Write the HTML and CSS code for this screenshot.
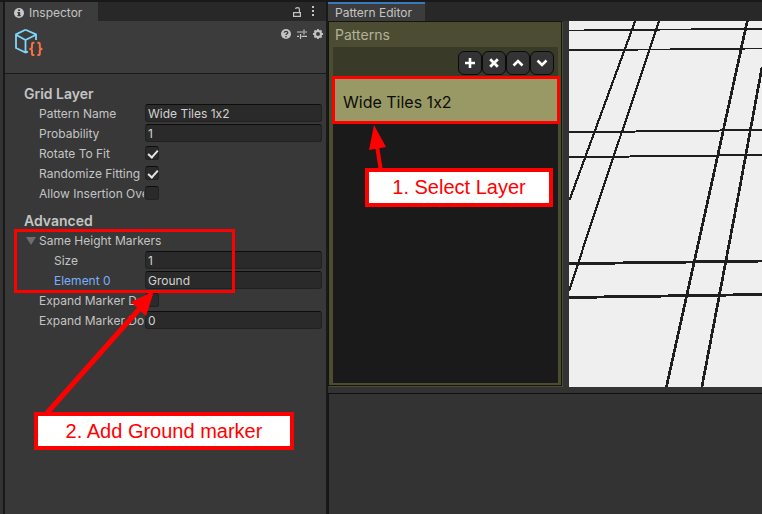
FILE: index.html
```html
<!DOCTYPE html>
<html lang="en">
<head>
<meta charset="utf-8">
<title>Pattern Editor</title>
<link rel="stylesheet" href="styles.css">
</head>
<body>
<div class="workspace">
  <div class="dock-edge"></div>
  <section class="inspector" aria-label="Inspector">
    <header class="tab-strip">
      <div class="tab tab-inspector">
        <svg width="10" height="10" viewBox="0 0 10 10"><circle cx="5" cy="5" r="5" fill="#c8c8c8"/><path d="M4 1.5h2v1.6H4zM3.4 4h2.8v3h.6v1.3H3.4V7H4V5.2h-.6z" fill="#3c3c3c"/></svg>
        <span>Inspector</span>
      </div>
      <div class="strip-tools">
        <button aria-label="Lock"><svg width="10" height="12" viewBox="0 0 10 12" fill="none" stroke="#c4c4c4" stroke-width="1.2"><path d="M1.6 6.6h6.8v3.8H1.6zM7.4 6.5V3.2Q7.4 1.6 5.5 1.6Q3.6 1.6 3.6 3"/></svg></button>
        <button aria-label="Menu"><svg width="4" height="12" viewBox="0 0 4 12" fill="#c4c4c4"><path d="M1 0h2v2H1zM1 4h2v2H1zM1 8h2v2H1z"/></svg></button>
      </div>
    </header>
    <div class="asset-header">
      <svg class="asset-icon" width="30" height="30" viewBox="0 0 30 30" fill="none">
        <path d="M12.500 1.800L23 6.400V12M12.500 1.800L3 6.400V20L12.500 24.600L15 23.600M3 6.800L12.500 12L23 6.800M12.500 12V24" stroke="#7fd6fd" stroke-width="1.8"/>
        <path d="M21.400 14.800H20.400Q19 14.800 19 16.200V19.200Q19 20.900 16.400 20.900Q19 20.900 19 22.600V25.400Q19 27 20.400 27H21.400M24.400 14.800H25.400Q26.800 14.800 26.800 16.200V19.200Q26.800 20.900 29.400 20.900Q26.800 20.900 26.800 22.600V25.400Q26.800 27 25.400 27H24.400" stroke="#ff6e40" stroke-width="2"/>
      </svg>
      <div class="asset-tools">
        <button aria-label="Help"><svg width="10" height="10" viewBox="0 0 10 10"><circle cx="5" cy="5" r="5" fill="#c4c4c4"/><path d="M3.2 3.8Q3.3 2.3 5 2.3Q6.8 2.3 6.8 3.6Q6.8 4.4 5.9 4.8Q5 5.2 5 6M5 7v1.4" fill="none" stroke="#3c3c3c" stroke-width="1.3"/></svg></button>
        <button aria-label="Presets"><svg width="10" height="10" viewBox="0 0 10 10" fill="none" stroke="#c4c4c4" stroke-width="1.2"><path d="M0 3h6M8 3h2M7 .5v5M0 7.4h2M4.5 7.4H10M3.5 5v5"/></svg></button>
        <button aria-label="Settings"><svg width="10" height="10" viewBox="0 0 10 10" fill="none" stroke="#c4c4c4"><circle cx="5" cy="5" r="3" stroke-width="2"/><path d="M5 0v2M5 8v2M0 5h2M8 5h2M1.5 1.5l1.3 1.3M7.2 7.2l1.3 1.3M1.5 8.5l1.3-1.3M7.2 2.8l1.3-1.3" stroke-width="1.8"/></svg></button>
      </div>
    </div>
    <form class="properties">
      <h2>Grid Layer</h2>
      <div class="row"><label for="name">Pattern Name</label><input class="field" id="name" type="text" value="Wide Tiles 1x2"></div>
      <div class="row"><label for="prob">Probability</label><input class="field" id="prob" type="text" value="1"></div>
      <div class="row"><label for="rotate">Rotate To Fit</label><input class="check" id="rotate" type="checkbox" checked></div>
      <div class="row"><label for="random">Randomize Fitting</label><input class="check" id="random" type="checkbox" checked></div>
      <div class="row"><label for="overlap">Allow Insertion Overlap</label><input class="check" id="overlap" type="checkbox"></div>
      <h2 class="advanced">Advanced</h2>
      <button class="foldout" type="button" aria-expanded="true"><svg width="10" height="8" viewBox="0 0 10 8"><path d="M0 0h10L5 8z" fill="#6e6e6e"/></svg>Same Height Markers</button>
      <div class="row nested"><label for="size">Size</label><input class="field" id="size" type="text" value="1"></div>
      <div class="row nested"><label class="active" for="element">Element 0</label><input class="field" id="element" type="text" value="Ground"></div>
      <div class="row"><label for="domain">Expand Marker Domain</label><input class="check" id="domain" type="checkbox"></div>
      <div class="row"><label for="amount">Expand Marker Domain Amount</label><input class="field" id="amount" type="text" value="0"></div>
    </form>
  </section>
  <section class="editor" aria-label="Pattern Editor">
    <header class="tab-strip"><div class="tab tab-editor">Pattern Editor</div></header>
    <div class="editor-main">
      <div class="patterns">
        <h3>Patterns</h3>
        <div class="pattern-list">
          <div class="list-tools">
            <button aria-label="Add"><svg width="12" height="12" viewBox="0 0 12 12"><path d="M6 1v10M1 6h10" stroke-width="2.6"/></svg></button>
            <button aria-label="Remove"><svg width="12" height="12" viewBox="0 0 12 12"><path d="M2.2 2.2l7.6 7.6M9.8 2.2L2.2 9.8" stroke-width="2.8"/></svg></button>
            <button aria-label="Move up"><svg width="12" height="12" viewBox="0 0 12 12"><path d="M1.5 8.5L6 4l4.500 4.500" stroke-width="2.6"/></svg></button>
            <button aria-label="Move down"><svg width="12" height="12" viewBox="0 0 12 12"><path d="M1.500 3.500L6 8l4.500-4.500" stroke-width="2.6"/></svg></button>
          </div>
          <button class="pattern-item">Wide Tiles 1x2</button>
        </div>
      </div>
      <div class="viewport">
        <svg width="193" height="366" viewBox="0 0 193 366" preserveAspectRatio="xMinYMin slice" fill="none" stroke="#1e1e1e" shape-rendering="crispEdges">
          <path d="M0 9.500L193 7.700M0 29.300L193 27.500" stroke-width="1.700"/>
          <path d="M0 111.300L193 109M0 136.200L193 134" stroke-width="2"/>
          <path d="M0 242.700L193 240M0 276.500L193 273.500" stroke-width="2.900"/>
          <path d="M66.500 -1L.5 179M90.500 -1L30 179L0 270" stroke-width="2.200"/>
          <path d="M178.500 -1L139 179L97 368M193 46L168.500 179L132.500 368" stroke-width="2.700"/>
        </svg>
      </div>
    </div>
    <div class="lower-pane"></div>
  </section>
</div>
<svg class="arrows" width="762" height="514" viewBox="0 0 762 514" fill="#f00" stroke="#f00" aria-hidden="true">
  <path d="M380.500 168L377 146" stroke-width="4"/>
  <path d="M374 125L386 147L369 150z" stroke="none"/>
  <path d="M47 413L142 306" stroke-width="5"/>
  <path d="M154 291L146 316L131 302z" stroke="none"/>
</svg>
<div class="marker-frame"></div>
<div class="callout step-one">1. Select Layer</div>
<div class="callout step-two">2. Add Ground marker</div>
</body>
</html>
```
FILE: styles.css
```css
* { box-sizing: border-box; }
html, body { height: 100%; }
body {
  margin: 0;
  overflow: hidden;
  background: #191919;
  color: #c4c4c4;
  font: 12px/18px Inter, "Liberation Sans", sans-serif;
  font-variant-ligatures: none;
}
h2, h3 { margin: 0; }
button { padding: 0; border: 0; background: none; color: inherit; font: inherit; font-variant-ligatures: none; }
svg { display: block; }

.workspace { display: flex; gap: 2px; height: 100%; padding-top: 2px; }
.dock-edge { flex: 0 0 3px; background: #333; }
.inspector { flex: 0 0 321px; min-width: 0; display: flex; flex-direction: column; background: #383838; }
.editor { flex: 1; min-width: 0; display: flex; flex-direction: column; background: #333; }

.tab-strip { flex: 0 0 19px; display: flex; justify-content: space-between; background: #282828; }
.tab { display: flex; align-items: center; background: #3c3c3c; line-height: 17px; white-space: nowrap; }
.tab-inspector { width: 93px; gap: 5px; padding: 2px 0 0 9px; }
.tab-editor { width: 97px; padding-left: 7px; border-top: 2px solid #3a79bb; }
.strip-tools { display: flex; align-items: center; gap: 9px; padding-right: 11px; }

.asset-header { flex: 0 0 53px; display: flex; justify-content: space-between; padding: 7px 3px 0 8px; background: #3c3c3c; border-bottom: 1px solid #1a1a1a; }
.asset-tools { display: flex; gap: 6px; height: 10px; margin-top: 1px; }

.properties { padding: 10px 4px 0 19px; }
.properties h2 { height: 20px; font-size: 14px; line-height: 20px; font-weight: 600; }
.properties .advanced { margin-top: 7px; }
.row { display: flex; gap: 1px; height: 20px; padding-left: 15px; }
.row label { flex: 0 0 105px; overflow: hidden; white-space: nowrap; line-height: 20px; }
.row.nested { padding-left: 30px; }
.row.nested label { flex-basis: 90px; }
.row .active { color: #7baefa; }
.field { flex: 1; min-width: 0; height: 18px; padding: 1px 2px 0; border: 1px solid #212121; border-top-color: #0d0d0d; border-radius: 3px; background: #2a2a2a; color: #d2d2d2; font: inherit; font-variant-ligatures: none; outline: 0; }
.check { appearance: none; width: 14px; height: 14px; margin: 2px 0 0; border: 1px solid #212121; border-top-color: #0d0d0d; border-radius: 3px; background: #2a2a2a; }
.check:checked::before { content: ""; display: block; width: 8px; height: 4px; margin: 3px 0 0 2px; border: solid #e6e6e6; border-width: 0 0 2px 2px; transform: rotate(-48deg); }
.foldout { display: flex; align-items: center; gap: 3px; height: 20px; padding-left: 2px; }

.editor-main { flex: 0 0 366px; display: flex; gap: 6px; }
.patterns { flex: 0 0 235px; display: flex; flex-direction: column; padding: 3px 4px 3px; border: 1px solid #15150c; border-right-color: #4c4c33; border-bottom-color: #4c4c33; background: #4c4c33; box-shadow: inset -1px -1px #15150c; }
.patterns h3 { height: 22px; padding-left: 2px; color: #b2b29c; font-size: 14px; line-height: 20px; font-weight: 400; }
.pattern-list { flex: 1; background: #1a1a1a; }
.list-tools { display: flex; justify-content: flex-end; height: 29px; padding: 4px 4px 0; background: #3a3a28; }
.list-tools button { display: grid; place-items: center; width: 24px; height: 24px; border: 1px solid #0b0b0b; border-radius: 6px; background: #333; }
.list-tools svg { fill: none; stroke: #fff; }
.pattern-item { display: block; width: calc(100% + 3px); height: 48px; margin: 0 -2px 0 -1px; padding: 4px 8px 0; border: 3px solid #f00; background: #999966; color: #0c0c08; font-size: 16px; text-align: left; }
.viewport { flex: 1; min-width: 0; background: #efefef; }
.viewport svg { width: 100%; height: 100%; }
.lower-pane { flex: 1; margin-top: 6px; border-left: 1px solid #151515; border-top: 1px solid #0f0f0f; background: #333; }

.arrows { position: absolute; left: 0; top: 0; }
.marker-frame { position: absolute; left: 14px; top: 229px; width: 221px; height: 64px; border: 3px solid #f00; }
.callout { position: absolute; border: 4px solid #f00; background: #fff; color: #f00; font: 20px/31px "Liberation Sans", Arial, sans-serif; text-align: center; white-space: nowrap; }
.step-one { left: 365px; top: 168px; width: 188px; height: 39px; }
.step-two { left: 34px; top: 412px; width: 260px; height: 38px; }
```
